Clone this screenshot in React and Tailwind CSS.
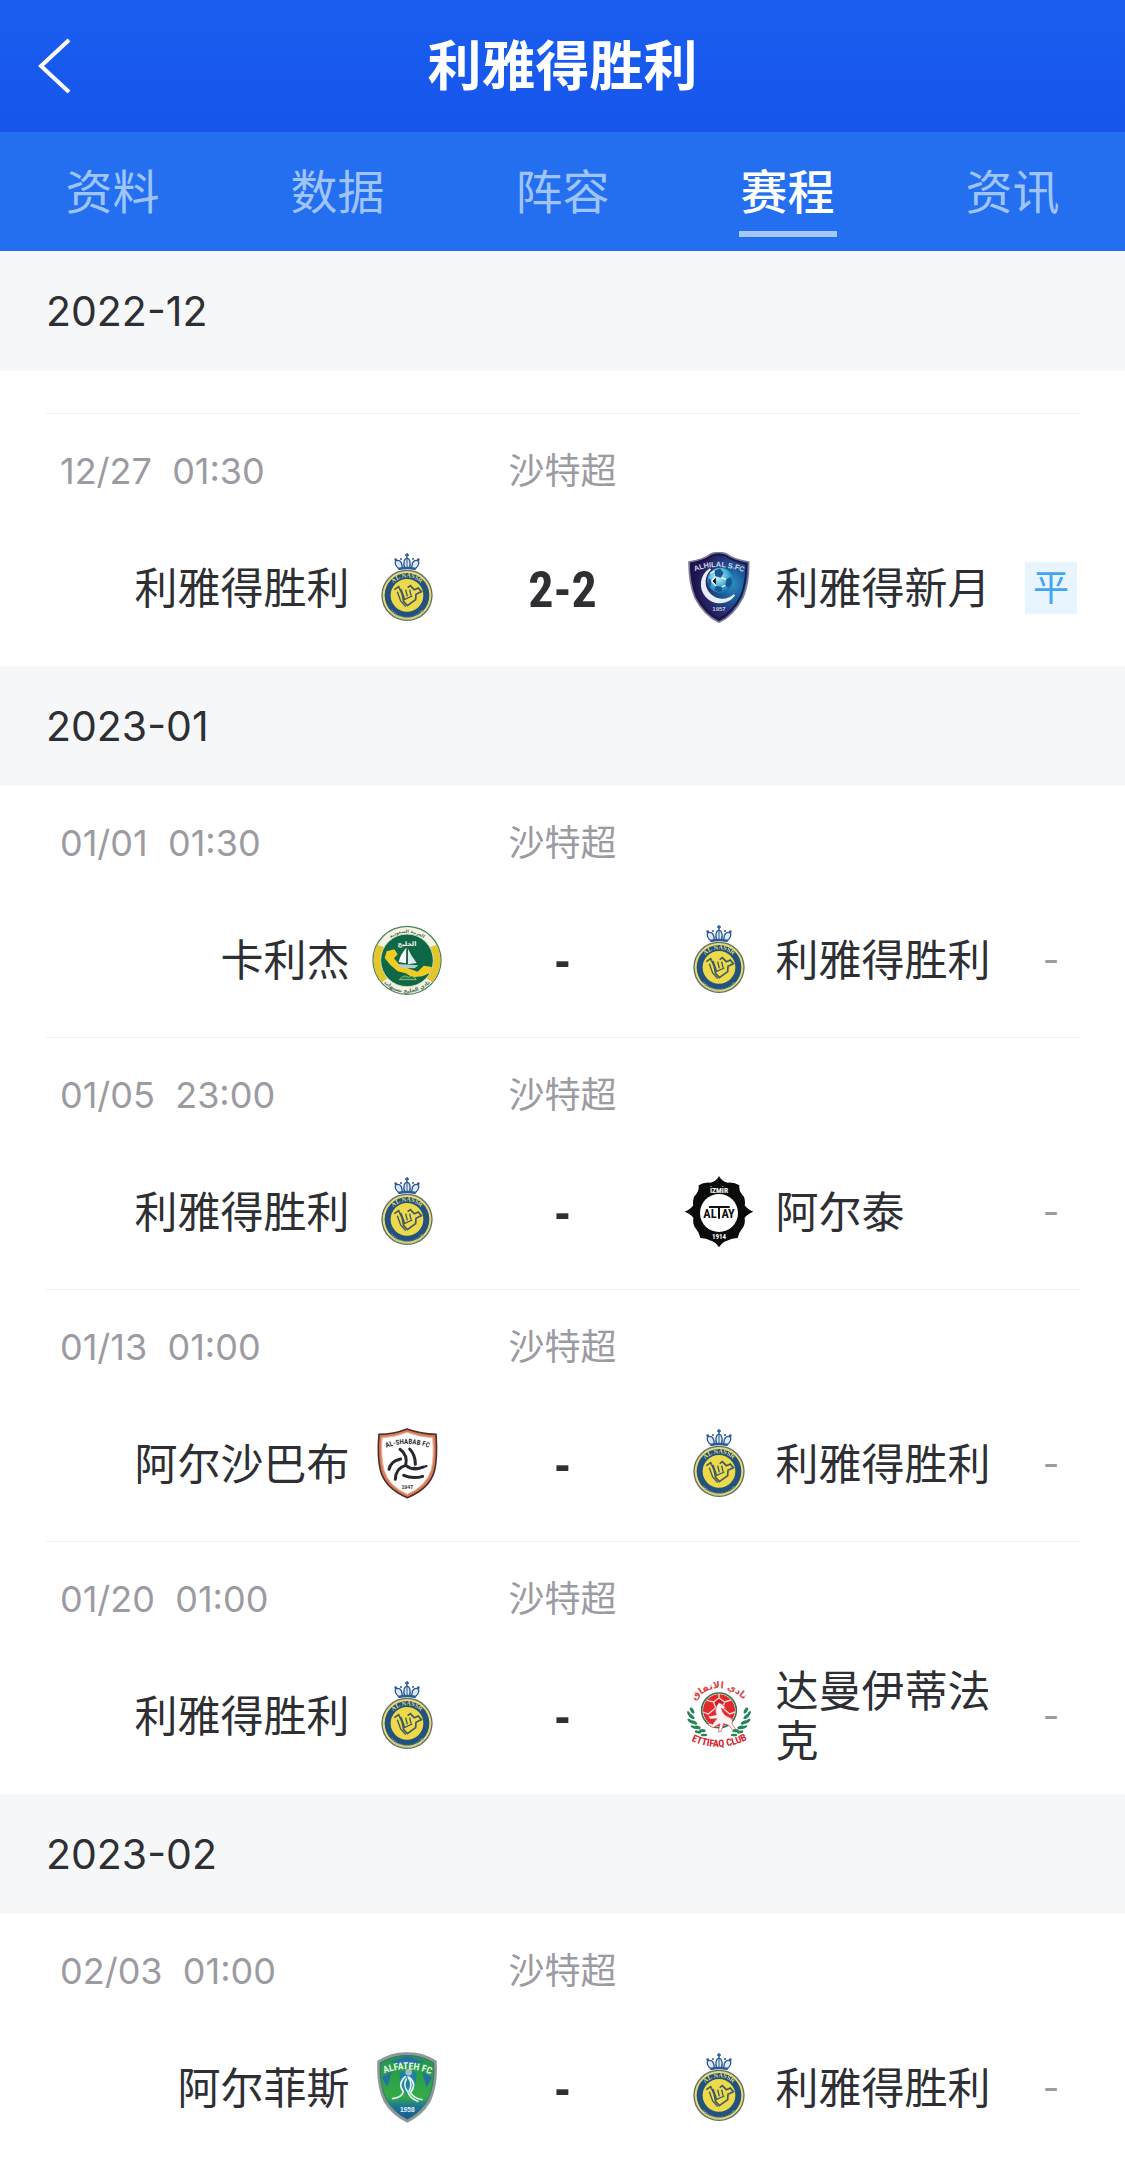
import React, { useId, useState } from "react";
import clsx from "clsx";

const TABS = ["资料", "数据", "阵容", "赛程", "资讯"];

const MONTHS = [
  {
    month: "2022-12",
    continued: true,
    matches: [
      { date: "12/27", time: "01:30", home: "nassr", away: "hilal", score: "2-2", result: "平" }
    ]
  },
  {
    month: "2023-01",
    matches: [
      { date: "01/01", time: "01:30", home: "khaleej", away: "nassr" },
      { date: "01/05", time: "23:00", home: "nassr", away: "altay" },
      { date: "01/13", time: "01:00", home: "shabab", away: "nassr" },
      { date: "01/20", time: "01:00", home: "nassr", away: "ettifaq" }
    ]
  },
  {
    month: "2023-02",
    matches: [{ date: "02/03", time: "01:00", home: "fateh", away: "nassr" }]
  }
];

function NassrCrest() {
  const id = useId();
  return (
    <svg viewBox="33 39 216 216" className="w-[72px] h-[72px] shrink-0" aria-hidden="true">
      <path id={`${id}t`} d="M84 172 A57 57 0 0 1 198 172" fill="none" />
      <path id={`${id}b`} d="M74 176 A67 67 0 0 0 208 176" fill="none" />
      {/* crown */}
      <path d="M117 90 C100 75 104 58 117 63 C126 66 128 72 129 76 C130 62 136 56 141 56 C146 56 152 62 153 76 C154 72 156 66 165 63 C178 58 182 75 165 90Z" fill="#dfe8f3" />
      <g fill="none" stroke="#2b5a94" strokeWidth="4">
        <path d="M117 90 C100 75 104 60 117 65 C128 69 125 80 127 88" />
        <path d="M165 90 C182 75 178 60 165 65 C154 69 157 80 155 88" />
        <path d="M134 88 C128 70 134 58 141 58 C148 58 154 70 148 88" />
        <path d="M141 52 V88" strokeWidth="3" />
        <path d="M115 90 Q141 84 167 90" strokeWidth="7" />
      </g>
      <g fill="#2b5a94">
        <path d="M139 42 H143 V46 H147 V50 H143 V56 H139 V50 H135 V46 H139Z" />
        <circle cx="107" cy="62" r="4" />
        <circle cx="175" cy="62" r="4" />
        <circle cx="123" cy="60" r="3" />
        <circle cx="159" cy="60" r="3" />
      </g>
      <circle cx="141" cy="169" r="77" fill="#5c6f63" />
      <circle cx="141" cy="169" r="73" fill="#ead973" />
      <circle cx="141" cy="169" r="67" fill="#23527f" />
      <circle cx="141" cy="169" r="49" fill="#eed94a" />
      <text fontSize="19" fontWeight="700" fill="#dfd97c" fontFamily="Liberation Serif, serif" textAnchor="middle">
        <textPath href={`#${id}t`} startOffset="50%">AL NASSR</textPath>
      </text>
      <text fontSize="14" fontWeight="700" fill="#a9bb8c" fontFamily="Liberation Serif, serif" textAnchor="middle">
        <textPath href={`#${id}b`} startOffset="50%">FOOTBALL CLUB</textPath>
      </text>
      <path
        d="M103 152 L116 143 L126 164 L131 188 L142 200 L167 182 L168 166 L184 158 L175 147 L163 152 L151 140 L143 146"
        fill="none"
        stroke="#3c5a66"
        strokeWidth="5"
      />
      <path d="M112 158 L122 186 L137 203 M123 150 L134 181 L157 171 M137 152 L142 172 M149 152 L153 170" fill="none" stroke="#3c5a66" strokeWidth="4" />
    </svg>
  );
}

function HilalCrest() {
  const id = useId();
  return (
    <svg viewBox="24 39 216 216" className="w-[72px] h-[72px] shrink-0" aria-hidden="true">
      <defs>
        <radialGradient id={`${id}g`} cx="0.72" cy="0.45" r="0.62">
          <stop offset="0" stopColor="#2f8fc4" />
          <stop offset="0.35" stopColor="#1d5c9a" />
          <stop offset="0.75" stopColor="#272768" />
          <stop offset="1" stopColor="#21134f" />
        </radialGradient>
        <radialGradient id={`${id}b`} cx="0.4" cy="0.35" r="0.7">
          <stop offset="0" stopColor="#d8f4fa" />
          <stop offset="0.6" stopColor="#3ba8d4" />
          <stop offset="1" stopColor="#1467a4" />
        </radialGradient>
      </defs>
      <path id={`${id}t`} d="M56 98 Q130 68 209 101" fill="none" />
      <path
        d="M42 69 Q90 60 106 46 Q131 35 156 46 Q174 60 221 69 Q222 132 204 175 Q176 229 132 250 Q86 227 60 176 Q42 132 42 69Z"
        fill={`url(#${id}g)`}
        stroke="#7b7d95"
        strokeWidth="5"
      />
      <path
        d="M49 75 Q90 66 109 51 Q131 43 153 51 Q174 66 214 75 Q214 131 198 171 Q173 220 132 241 Q91 220 66 172 Q50 132 49 75Z"
        fill="none"
        stroke="#1b144b"
        strokeWidth="5"
      />
      <text fontSize="22" fontWeight="700" fill="#d3d5e8" fontFamily="Liberation Sans, sans-serif" textAnchor="middle">
        <textPath href={`#${id}t`} startOffset="50%">ALHILAL S.FC</textPath>
      </text>
      <path d="M106 90 A54 54 0 1 0 178 168 A48 48 0 0 1 106 90Z" fill="#e8edf7" stroke="#e8edf7" strokeWidth="6" />
      <circle cx="136" cy="124" r="38" fill={`url(#${id}b)`} />
      <g fill="#17588f">
        <path d="M118 95 L135 88 L146 102 L138 116 L121 112Z" />
        <path d="M155 120 L168 115 L171 132 L160 147 L151 139Z" />
        <path d="M101 117 L110 127 L106 144 L100 137Z" />
        <path d="M123 141 L140 143 L142 155 L131 160 L118 152Z" />
      </g>
      <path d="M106 103 L119 96 M138 116 L153 121 M122 113 L110 127 L123 140 M151 139 L140 144" stroke="#effbff" strokeWidth="4" />
      <text x="132" y="216" fontSize="18" fontWeight="700" fill="#c7cadf" fontFamily="Liberation Sans, sans-serif" textAnchor="middle">
        1957
      </text>
    </svg>
  );
}

function KhaleejCrest() {
  const id = useId();
  return (
    <svg viewBox="33 27 216 216" className="w-[72px] h-[72px] shrink-0" aria-hidden="true">
      <path id={`${id}t`} d="M58 136 A83 83 0 0 1 224 136" fill="none" />
      <path id={`${id}b`} d="M46 138 A95 95 0 0 0 236 138" fill="none" />
      <circle cx="141" cy="136" r="104" fill="#4e805c" />
      <circle cx="141" cy="136" r="100" fill="#f3f3e6" />
      <path d="M52 90 A100 100 0 0 0 66 202 L84 188 A78 78 0 0 1 74 97Z" fill="#e3c62c" />
      <path d="M230 90 A100 100 0 0 1 216 202 L198 188 A78 78 0 0 0 208 97Z" fill="#e3c62c" />
      <circle cx="141" cy="136" r="79" fill="#0e6746" stroke="#d3dcb8" strokeWidth="3" />
      <path d="M80 109 L103 103 L113 118 L102 130 L119 151 L144 160 L173 170 L191 152 L216 156 L210 174 L187 184 L157 187 L137 175 L113 169 L91 150 L74 129Z" fill="#f0cc24" />
      <path d="M139 98 Q121 118 116 141 L138 145Z" fill="#f7faf7" />
      <path d="M144 101 Q154 123 170 144 L144 148Z" fill="#e0eaef" />
      <path d="M113 147 L175 151 L164 160 L124 158Z" fill="#b4cfd4" />
      <path d="M118 194 Q132 176 145 187 Q159 176 169 194Z" fill="#1b7e54" stroke="#dcd975" strokeWidth="2" />
      <text x="141" y="93" fontSize="19" fontWeight="700" fill="#f3f5ea" fontFamily="DejaVu Sans, sans-serif" textAnchor="middle">
        الخليج
      </text>
      <text fontSize="13" fontWeight="700" fill="#49684f" fontFamily="DejaVu Sans, sans-serif" textAnchor="middle">
        <textPath href={`#${id}t`} startOffset="50%">العربية السعودية</textPath>
      </text>
      <text fontSize="16" fontWeight="700" fill="#49684f" fontFamily="DejaVu Sans, sans-serif" textAnchor="middle">
        <textPath href={`#${id}b`} startOffset="50%">نادي الخليج بسيهات</textPath>
      </text>
    </svg>
  );
}

function AltayCrest() {
  return (
    <svg viewBox="24 33 216 216" className="w-[72px] h-[72px] shrink-0" aria-hidden="true">
      <path
        d="M132 33 Q139 49 158 53 Q178 51 193 61 Q190 80 207 95 Q212 113 209 121 Q218 134 235 140 Q217 147 209 158 Q212 179 201 191 Q190 205 188 219 Q170 220 156 227 Q140 232 132 247 Q124 232 108 227 Q94 220 76 219 Q74 205 63 191 Q52 179 55 158 Q47 147 29 140 Q46 134 55 121 Q52 113 57 95 Q74 80 71 61 Q86 51 106 53 Q125 49 132 33Z"
        fill="#0b0b0b"
      />
      <circle cx="132" cy="144" r="57" fill="#fff" />
      <g fontFamily="Roboto Condensed, Liberation Sans, sans-serif" fontWeight="700" textAnchor="middle">
        <text x="132" y="83" fontSize="23" fill="#fff">İZMİR</text>
        <text x="105" y="160" fontSize="37" fill="#111">AL</text>
        <text x="159" y="160" fontSize="37" fill="#111">AY</text>
        <text x="132" y="223" fontSize="21" fill="#fff">1914</text>
      </g>
      <path d="M102 126 H164 M132 126 V161" stroke="#111" strokeWidth="6" />
    </svg>
  );
}

function ShababCrest() {
  const id = useId();
  const shield = "M57 58 Q101 58 141 42 Q183 57 228 58 Q233 131 223 169 Q208 222 142 248 Q78 222 62 169 Q51 124 57 58Z";
  return (
    <svg viewBox="33 39 216 216" className="w-[72px] h-[72px] shrink-0" aria-hidden="true">
      <path id={`${id}t`} d="M72 101 Q141 72 213 101" fill="none" />
      <path d={shield} fill="#d77d5b" stroke="#4d302c" strokeWidth="5" />
      <path
        d="M66 68 Q105 67 141 52 Q180 67 218 68 Q223 128 214 163 Q200 213 142 238 Q87 214 72 165 Q62 124 66 68Z"
        fill="#fff"
        stroke="#efb199"
        strokeWidth="3"
      />
      <text fontSize="21" fontWeight="700" fill="#302f35" fontFamily="Roboto Condensed, Liberation Sans, sans-serif" textAnchor="middle">
        <textPath href={`#${id}t`} startOffset="50%">AL-SHABAB FC</textPath>
      </text>
      <g fill="none" stroke="#29272e" strokeWidth="9" strokeLinecap="round">
        <path d="M120 103 Q144 120 137 151 Q161 170 190 156" />
        <path d="M149 102 Q166 119 166 148" />
        <path d="M137 151 Q107 159 106 193" />
        <path d="M87 163 Q93 137 122 132" />
        <path d="M131 181 Q158 193 188 184" />
        <path d="M160 158 Q180 162 200 153" strokeWidth="6" />
      </g>
      <text x="142" y="222" fontSize="16" fontWeight="700" fill="#44363a" fontFamily="Liberation Sans, sans-serif" textAnchor="middle">
        1947
      </text>
    </svg>
  );
}

function EttifaqCrest() {
  const id = useId();
  const leaves = [[47, 124, 60], [47, 144, 40], [55, 162, 25], [66, 177, 15], [82, 187, 0]];
  return (
    <svg viewBox="24 30 216 216" className="w-[72px] h-[72px] shrink-0" aria-hidden="true">
      <path id={`${id}t`} d="M58 92 Q130 18 208 90" fill="none" />
      <path id={`${id}b`} d="M40 208 Q132 256 226 204" fill="none" />
      <circle cx="132" cy="121" r="52" fill="#fff" stroke="#38724c" strokeWidth="5" />
      <circle cx="132" cy="121" r="48" fill="#e02a2d" />
      <path d="M116 96 L132 84 L149 96 L143 114 H122Z" fill="#c61e24" />
      <path d="M132 72 V84 L149 96 L168 90 M149 96 L143 114 L164 132 L181 126 M143 114 H122 L100 132 L84 126 M122 114 L116 96 L96 91 M116 96 L132 84" fill="none" stroke="#ffd9d4" strokeWidth="4" />
      {/* horse */}
      <path
        d="M131 98 Q144 100 151 114 L145 118 L139 114 Q143 135 161 141 Q176 145 171 162 L183 179 L177 185 L160 165 L146 161 L139 184 L130 186 L135 161 L114 173 L99 164 L102 159 L113 163 L125 146 L104 147 L100 137 L108 138 L124 134 Q117 117 131 98Z"
        fill="#fff4f3"
        stroke="#d4474b"
        strokeWidth="2"
      />
      <g fill="#27845a">
        {leaves.map(([x, y, r]) => (
          <g key={y}>
            <g transform={`rotate(${r} ${x} ${y})`}>
              <ellipse cx={x} cy={y - 5} rx="10" ry="5" />
              <ellipse cx={x + 5} cy={y + 8} rx="10" ry="4" />
            </g>
            <g transform={`rotate(${-r} ${264 - x} ${y})`}>
              <ellipse cx={264 - x} cy={y - 5} rx="10" ry="5" />
              <ellipse cx={259 - x} cy={y + 8} rx="10" ry="4" />
            </g>
          </g>
        ))}
      </g>
      <text fontSize="28" fontWeight="700" fill="#d94444" fontFamily="DejaVu Sans, sans-serif" textAnchor="middle">
        <textPath href={`#${id}t`} startOffset="50%">نادي الاتفاق</textPath>
      </text>
      <text fontSize="30" fontWeight="700" fill="#db2028" fontFamily="Roboto Condensed, Liberation Sans, sans-serif" textAnchor="middle">
        <textPath href={`#${id}b`} startOffset="50%">ETTIFAQ CLUB</textPath>
      </text>
    </svg>
  );
}

function FatehCrest() {
  const id = useId();
  return (
    <svg viewBox="33 36 216 216" className="w-[72px] h-[72px] shrink-0" aria-hidden="true">
      <defs>
        <linearGradient id={`${id}g`} x1="0" x2="0" y1="0" y2="1">
          <stop offset="0" stopColor="#23934f" />
          <stop offset="0.65" stopColor="#35ab45" />
          <stop offset="0.8" stopColor="#1b7594" />
          <stop offset="1" stopColor="#1c5592" />
        </linearGradient>
      </defs>
      <path id={`${id}t`} d="M64 104 Q141 70 221 107" fill="none" />
      <path
        d="M52 62 Q98 35 141 37 Q185 35 230 62 Q235 137 211 187 Q184 230 142 248 Q99 230 72 187 Q48 137 52 62Z"
        fill="#8b999b"
      />
      <path
        d="M61 68 Q101 46 141 46 Q182 46 221 68 Q225 134 203 181 Q179 220 142 238 Q105 220 80 181 Q57 134 61 68Z"
        fill={`url(#${id}g)`}
        stroke="#3b7573"
        strokeWidth="3"
      />
      <path d="M66 112 L94 96 L82 142Z M216 112 L186 96 L200 142Z M92 66 L141 48 L191 66 L141 74Z" fill="#246fa5" />
      <path d="M118 98 Q142 82 170 100 L165 142 L145 168 L123 142Z" fill="#2180a0" />
      <circle cx="146" cy="97" r="10" fill="#a1bdc9" />
      <g fill="none" stroke="#e2f6ee" strokeWidth="5" strokeLinecap="round">
        <path d="M136 110 Q112 130 130 155 Q125 172 98 176" />
        <path d="M148 112 Q172 132 151 158 Q166 177 186 179" />
        <path d="M139 117 Q128 137 143 155 Q149 173 173 184" />
        <path d="M144 111 Q160 131 147 154" />
      </g>
      <text fontSize="29" fontWeight="700" fill="#e4f6e4" fontFamily="Roboto Condensed, Liberation Sans, sans-serif" textAnchor="middle">
        <textPath href={`#${id}t`} startOffset="50%">ALFATEH FC</textPath>
      </text>
      <text x="142" y="217" fontSize="20" fontWeight="700" fill="#e3f2fa" fontFamily="Liberation Sans, sans-serif" textAnchor="middle">
        1958
      </text>
    </svg>
  );
}

const TEAMS = {
  nassr: { name: "利雅得胜利", Crest: NassrCrest },
  hilal: { name: "利雅得新月", Crest: HilalCrest },
  khaleej: { name: "卡利杰", Crest: KhaleejCrest },
  altay: { name: "阿尔泰", Crest: AltayCrest },
  shabab: { name: "阿尔沙巴布", Crest: ShababCrest },
  ettifaq: { name: "达曼伊蒂法克", Crest: EttifaqCrest },
  fateh: { name: "阿尔菲斯", Crest: FatehCrest }
};

function MatchRow({ match }) {
  const home = TEAMS[match.home];
  const away = TEAMS[match.away];

  return (
    <li className="pt-8 pb-[27px] border-b border-[#f0f0f3] last:border-transparent">
      <div className="grid grid-cols-3 px-[14px] text-4xl leading-[50px] text-[#9b9ba1]">
        <time className="whitespace-pre">{`${match.date}  ${match.time}`}</time>
        <span className="text-center">沙特超</span>
      </div>

      <div className="mt-[42px] min-h-[100px] grid grid-cols-[1fr_72px_240px_72px_1fr] items-center text-[43px] leading-[50px] text-[#2e2f33]">
        <span className="pr-[21px] text-right">{home.name}</span>
        <home.Crest />
        <span className="pt-1 text-center text-[50px] font-bold font-['Liberation_Sans_Narrow','Roboto_Condensed','Open_Sans_Condensed','Roboto',sans-serif]">
          {match.score || "-"}
        </span>
        <away.Crest />
        <div className="pl-[21px] pr-[2px] flex items-center justify-between">
          <span className="w-[220px]">{away.name}</span>
          <span
            className={clsx(
              "w-[52px] shrink-0 text-center text-4xl leading-[52px]",
              match.result ? "bg-[#e8f4fe] text-[#42a5f1]" : "text-[#9b9ba1]"
            )}
          >
            {match.result || "-"}
          </span>
        </div>
      </div>
    </li>
  );
}

export default function App() {
  const [tab, setTab] = useState("赛程");

  return (
    <div className="min-h-screen bg-white font-['Inter','Noto_Sans_CJK_SC',sans-serif]">
      {/* Header */}
      <header className="grid grid-cols-[1fr_auto_1fr] items-center h-[132px] px-9 bg-linear-to-b from-[#1a5eef] to-[#1755eb] text-white">
        <button type="button" aria-label="返回" className="justify-self-start">
          <svg viewBox="0 0 36 56" className="w-9 h-14" fill="none" stroke="currentColor" strokeWidth="4">
            <path d="M33 2 L5 28 L33 54" />
          </svg>
        </button>
        <h1 className="pt-0.5 text-[54px] leading-[72px] font-bold">利雅得胜利</h1>
      </header>

      {/* Tabs */}
      <nav className="grid grid-cols-5 h-[119px] bg-[#246ff0]">
        {TABS.map((t) => (
          <button
            key={t}
            type="button"
            onClick={() => setTab(t)}
            className={clsx(
              "relative pt-0.5 text-[47px]",
              t === tab ? "text-white font-medium" : "text-[#9fc4fa]"
            )}
          >
            {t}
            {t === tab && (
              <span className="absolute bottom-[14px] left-1/2 -translate-x-1/2 w-[98px] h-[6px] bg-[#a3c7fb]" />
            )}
          </button>
        ))}
      </nav>

      {/* Schedule */}
      <main>
        {MONTHS.map(({ month, continued, matches }) => (
          <section key={month}>
            <h2 className="px-[46px] text-[41px] leading-[120px] bg-[#f6f7f9] text-[#2e2f33]">{month}</h2>
            {continued && <div className="h-[43px] mx-[46px] border-b border-[#f0f0f3]" />}
            <ul className="px-[46px]">
              {matches.map((m) => (
                <MatchRow key={m.date} match={m} />
              ))}
            </ul>
          </section>
        ))}
      </main>
    </div>
  );
}
